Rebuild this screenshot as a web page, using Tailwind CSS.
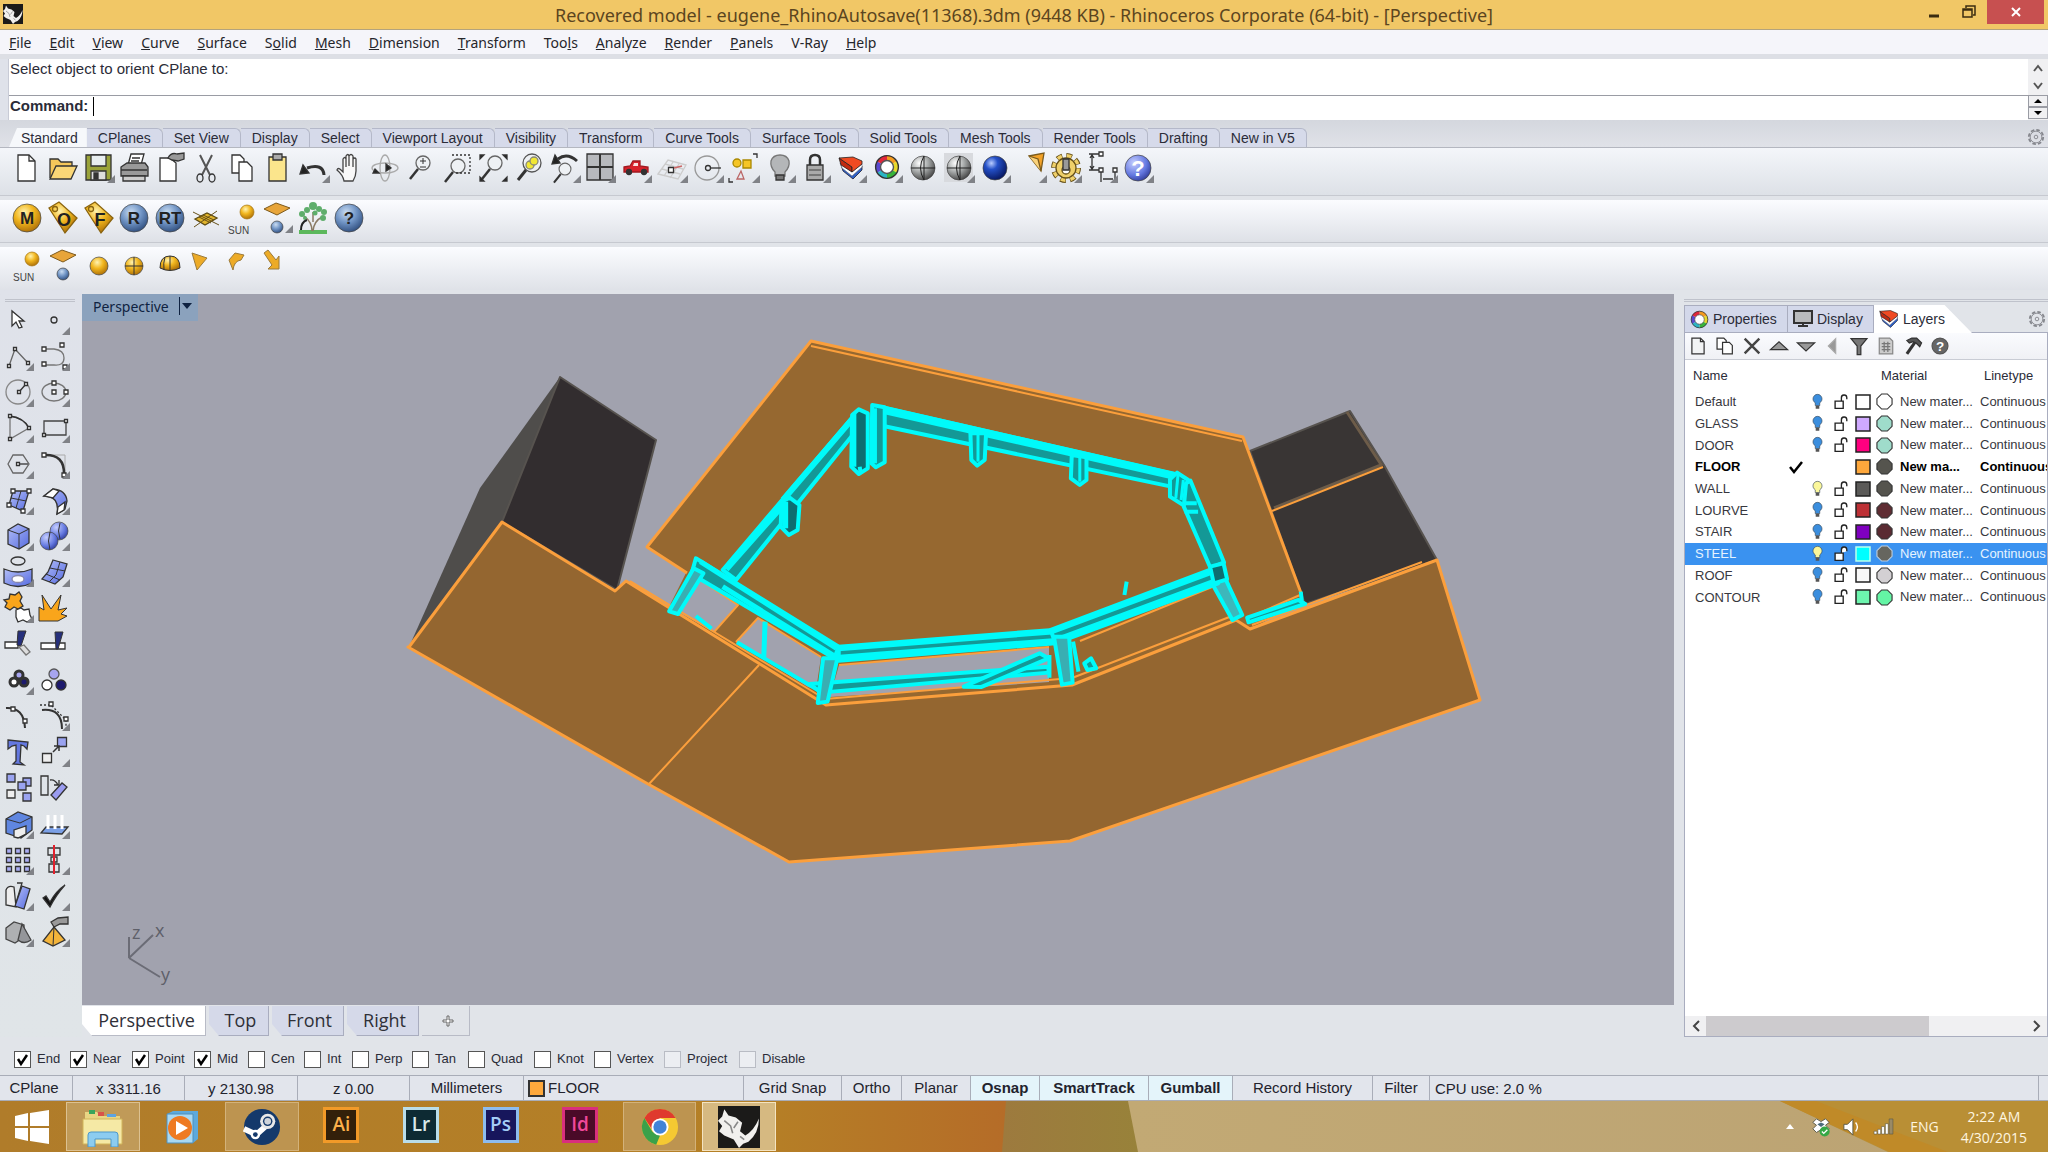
<!DOCTYPE html>
<html lang="en">
<head>
<meta charset="utf-8">
<title>Rhinoceros Corporate</title>
<script src="https://cdn.jsdelivr.net/npm/@tailwindcss/browser@4"></script>
</head>
<body class="flex min-h-screen flex-col overflow-x-hidden bg-[#e1e4e9] font-['Liberation_Sans',Arial,sans-serif] text-[14px] text-[#2b2c38]">

<svg class="absolute size-0" aria-hidden="true">
  <defs>
    <radialGradient id="gold" cx=".4" cy=".3" r=".75"><stop offset="0" stop-color="#fff3b0"/><stop offset=".45" stop-color="#f2b71f"/><stop offset="1" stop-color="#a86a05"/></radialGradient>
    <radialGradient id="blue" cx=".4" cy=".3" r=".75"><stop offset="0" stop-color="#c9dcf2"/><stop offset=".5" stop-color="#6f93c4"/><stop offset="1" stop-color="#2c4a7a"/></radialGradient>
    <radialGradient id="royal" cx=".35" cy=".3" r=".75"><stop offset="0" stop-color="#b8ccff"/><stop offset=".35" stop-color="#2450c8"/><stop offset="1" stop-color="#06155c"/></radialGradient>
    <radialGradient id="peri" cx=".35" cy=".3" r=".8"><stop offset="0" stop-color="#c5ceff"/><stop offset=".6" stop-color="#6478e0"/><stop offset="1" stop-color="#2a3590"/></radialGradient>
    <radialGradient id="grey" cx=".35" cy=".3" r=".75"><stop offset="0" stop-color="#fff"/><stop offset=".5" stop-color="#a5a8a8"/><stop offset="1" stop-color="#444"/></radialGradient>
    <linearGradient id="cube" x1="0" y1="0" x2="1" y2="1"><stop offset="0" stop-color="#b4bff8"/><stop offset="1" stop-color="#566be0"/></linearGradient>
    <symbol id="wheel" viewBox="0 0 24 24"><g fill="none" stroke-width="5"><path d="M12 4a8 8 0 0 1 7 4" stroke="#f59b1e"/><path d="M19 8a8 8 0 0 1 0 8" stroke="#e8d92a"/><path d="M19 16a8 8 0 0 1-7 4" stroke="#38b43a"/><path d="M12 20a8 8 0 0 1-7-4" stroke="#2bb5c4"/><path d="M5 16a8 8 0 0 1 0-8" stroke="#5a48d0"/><path d="M5 8a8 8 0 0 1 7-4" stroke="#e0263a"/></g><circle cx="12" cy="12" r="10.500" fill="none" stroke="#333"/><circle cx="12" cy="12" r="6" fill="#fff" stroke="#555"/></symbol>
    <symbol id="layers" viewBox="0 0 26 24"><path d="M3 9l11 9 10-8v4l-9 9-10-8z" fill="#2d5fc4" stroke="#223" stroke-width=".8"/><path d="M2 7l12 9 10-8v3l-10 9-10-8z" fill="#fff" stroke="#667" stroke-width=".6"/><path d="M1 2l13 9v5L3 9z" fill="#c22a10" stroke="#222" stroke-width=".8"/><path d="M1 2l14-1 9 4v3l-10 8v-5z" fill="#f04a22" stroke="#222" stroke-width=".8"/></symbol>
    <symbol id="gear" viewBox="0 0 20 20"><circle cx="10" cy="10" r="8" fill="none" stroke="#84868c" stroke-width="2" stroke-dasharray="4 2.300"/><circle cx="10" cy="10" r="6.500" fill="none" stroke="#84868c"/><circle cx="10" cy="10" r="2" fill="none" stroke="#84868c"/></symbol>
    <symbol id="rhino" viewBox="0 0 40 40"><path d="M0 0h40v40H0z" fill="#1b1a19"/><path d="M0 14l4-4 2-7 4 6 7 2 6 5-2 8 5 4q8-4 13-16 0 14-10 22l-5 2-4 4-5-8-9-4-5-4 3-5z" fill="#f1f0ee"/><path d="M6 14l6 5 2 7M19 15l-4 6M21 29l4 3" stroke="#888" stroke-width="1.500" fill="none"/></symbol>
    <symbol id="lock" viewBox="0 0 18 20"><path d="M3 9h9v8H3zM10 9V5.500A3 3 0 0 1 16 5v2" fill="#fff" stroke="#222" stroke-width="1.500"/></symbol>
    <symbol id="bulb" viewBox="0 0 14 20"><path d="M4.500 11C2.500 9.500 2 8 2 6.500a5 5 0 0 1 10 0c0 1.500-.5 3-2.500 4.500v3h-5z" fill="currentColor" stroke="#345" stroke-width=".7"/><path d="M5 14h4v3.500H5z" fill="#555"/></symbol>
  </defs>
</svg>

<header class="grid h-[30px] shrink-0 grid-cols-[140px_1fr_140px] items-start border-b border-[#b3a37c] bg-[#f1c766]">
  <svg class="mt-1 ml-[3px] size-[20px]"><use href="#rhino"/></svg>
  <h1 class="text-center font-['Noto_Sans','Open_Sans',sans-serif] text-[18px] leading-[30px] whitespace-nowrap text-[#5b4520]">Recovered model - eugene_RhinoAutosave(11368).3dm (9448 KB) - Rhinoceros Corporate (64-bit) - [Perspective]</h1>
  <div class="flex justify-end pr-1">
    <button aria-label="Minimize" class="flex h-[24px] w-[34px] items-center justify-center"><svg viewBox="0 0 12 12" class="size-[12px]"><path d="M1 10h10" stroke="#3b2c10" stroke-width="3"/></svg></button>
    <button aria-label="Restore" class="flex h-[24px] w-[36px] items-center justify-center"><svg viewBox="0 0 16 16" class="size-[16px]"><path d="M2 5h9v8H2zM2 6h9M5 4V2h9v9h-2" fill="none" stroke="#3b2c10" stroke-width="1.500"/></svg></button>
    <button aria-label="Close" class="flex h-[24px] w-[57px] items-center justify-center bg-[#c75050]"><svg viewBox="0 0 12 12" class="size-[12px]"><path d="M2 2l8 8M10 2l-8 8" stroke="#fff" stroke-width="2"/></svg></button>
  </div>
</header>

<nav class="flex h-[24px] shrink-0 items-center gap-[18px] bg-[#f5f5fa] pl-[9px] font-['Noto_Sans','Open_Sans',sans-serif] text-[14px] text-[#26262b]">
  <a href="#"><u>F</u>ile</a><a href="#"><u>E</u>dit</a><a href="#"><u>V</u>iew</a><a href="#"><u>C</u>urve</a><a href="#"><u>S</u>urface</a><a href="#">S<u>o</u>lid</a><a href="#"><u>M</u>esh</a><a href="#"><u>D</u>imension</a><a href="#"><u>T</u>ransform</a><a href="#">Too<u>l</u>s</a><a href="#"><u>A</u>nalyze</a><a href="#"><u>R</u>ender</a><a href="#"><u>P</u>anels</a><a href="#">V-Ray</a><a href="#"><u>H</u>elp</a>
</nav>

<section class="flex h-[66px] shrink-0 border-t-[5px] border-[#dddfe5] bg-white text-[15px]">
  <div class="w-[9px] border-r border-[#c8cbd6] bg-[#dfe2ea]"></div>
  <div class="flex flex-1 flex-col">
    <p class="h-[36px] pl-px leading-[20px]">Select object to orient CPlane to:</p>
    <div class="flex h-[25px] items-center border-t border-[#9a9ca4] pb-[3px] pl-px">
      <label for="cmd" class="font-bold">Command:</label>
      <span class="ml-[5px] h-[19px] w-px bg-black"></span>
      <input id="cmd" class="h-full flex-1 outline-none">
    </div>
  </div>
  <div class="flex w-[20px] flex-col bg-[#f0f0f2]">
    <button aria-label="Scroll up" class="flex h-[18px] items-center justify-center"><svg viewBox="0 0 12 10" class="h-[10px] w-[12px]"><path d="M2 8l4-5 4 5" fill="none" stroke="#555" stroke-width="2"/></svg></button>
    <button aria-label="Scroll down" class="flex h-[18px] items-center justify-center"><svg viewBox="0 0 12 10" class="h-[10px] w-[12px]"><path d="M2 2l4 5 4-5" fill="none" stroke="#555" stroke-width="2"/></svg></button>
    <button aria-label="Previous" class="flex h-[12px] items-center justify-center border border-[#9a9ca4]"><svg viewBox="0 0 8 4" class="h-[4px] w-[8px]"><path d="M0 4l4-4 4 4z"/></svg></button>
    <button aria-label="Next" class="flex h-[12px] items-center justify-center border border-[#9a9ca4]"><svg viewBox="0 0 8 4" class="h-[4px] w-[8px]"><path d="M0 0l4 4 4-4z"/></svg></button>
  </div>
</section>

<div class="flex h-[28px] shrink-0 items-end border-b border-[#b4b7c0] bg-gradient-to-b from-[#d4d7de] to-[#e0e2e8] pl-[9px]">
  <div id="tabs" class="flex h-[19px] items-end"></div>
  <button aria-label="Toolbar options" class="mr-[3px] mb-px ml-auto"><svg class="size-[18px]"><use href="#gear"/></svg></button>
</div>

<div class="h-[48px] shrink-0 border-b border-[#c6c9d0] bg-gradient-to-b from-[#f4f6fa] to-[#dde1e7] pl-[9px]">
  <div id="standard" class="flex h-[40px] w-[1147px] items-center"></div>
</div>
<div class="mt-[4px] h-[43px] shrink-0 border-b border-[#c6c9d0] bg-gradient-to-b from-[#fbfcff] to-[#dee1e7] pl-[9px]">
  <div id="vray" class="flex h-[36px] w-[358px] items-center"></div>
</div>
<div class="mt-[4px] h-[43px] shrink-0 bg-gradient-to-b from-[#fbfcff] to-[#dfe2e8] pl-[9px]">
  <div id="lights" class="flex h-[36px] w-[286px] items-center"></div>
</div>

<main class="flex flex-1 items-stretch">
  <aside class="w-[82px] shrink-0 bg-gradient-to-b from-[#dfe2ea] to-[#e0e5e8] pt-[9px]">
    <div class="mr-[7px] ml-[5px] h-[3px] border-y border-[#bfc2cb]"></div>
    <div id="tools" class="grid w-[72px] grid-cols-2"></div>
  </aside>

  <div class="flex min-w-0 flex-1 flex-col pt-[4px]">
    <section class="grid flex-1 bg-[#a1a2ae]">
      <svg viewBox="82 294 1592 711" class="col-start-1 row-start-1 h-[711px] w-full" role="img" aria-label="Perspective model view">
        <g stroke-linejoin="round">
          <path d="M560 377L480 488 409 647 502 522z" fill="#4f4d4b"/>
          <path d="M560 377l96 63-39 150-115-68z" fill="#322d2f" stroke="#57534f" stroke-width="2"/>
          <path d="M1250 451l100-40 34 54 53 95-132 44z" fill="#393534" stroke="#57534f" stroke-width="2"/>
          <path d="M1347 412l35 54M1274 508l107-43" stroke="#6d5c49" stroke-width="3"/>
          <path d="M811 341l432 96 58 156-1 10-51 27-13-9-165 65-246 21-157-98 18-36-39-26z" fill="#966830"/>
          <path d="M502 522l113 70 11-11 200 124 246-21 164-64 14 9 187-69 43 140-410 141-281 21-141-78-240-137z" fill="#946630"/>
          <g fill="#a1a2ae"><path d="M700 580l38 25-24 27-34-19z"/><path d="M758 618l63 39-5 33-8-3-72-45z"/><path d="M839 665l210-18v35l-85 6-134 9z"/></g>
          <g fill="none" stroke="#fb9f3c" stroke-width="2">
            <path d="M687 573l-40-26 164-206 432 96 58 156" stroke-width="3"/><path d="M811 346l431 95"/><path d="M1272 511l111-44"/>
            <path d="M409 647l93-125 113 69 11-10 200 124 246-20 164-65 14 9 187-69 43 140-410 141-281 21-141-78-240-137z" stroke-width="3"/>
            <path d="M630 581l195 118 247-21 160-62M1252 625l170-63M1250 617l50-22M649 784l110-119M700 580l38 25-24 27M736 642l22-24 63 39M839 665l210-18M1080 641l137-56" />
          </g>
        </g>
        <g transform="translate(620 320) scale(.4464 .3333)" fill="#149896" stroke="#00fafa" stroke-width="4" stroke-linejoin="round">
          <g class="[&>*]:[vector-effect:non-scaling-stroke]">
            <path d="M590 262L1250 465l-15 35L590 318z"/><path d="M592 270L1250 470" stroke-width="8"/>
            <path d="M525 285l20 20-285 475-30-30z"/><path d="M525 290L365 540M362 560L238 748" stroke-width="6"/>
            <path d="M520 285l15-17 20 12v165l-20 17-17-22z" fill="#0e6d70"/><path d="M525 280v160M537 440l2 20" stroke-width="4"/>
            <path d="M565 255l28 7v165l-20 15-10-12z"/><path d="M570 265v165" stroke-width="5"/>
            <path d="M785 340h35l-3 80-17 17-13-17z"/><path d="M802 345v80" stroke-width="3"/>
            <path d="M1012 405l33 7v68l-15 15-20-20z"/><path d="M1030 410v75" stroke-width="3"/>
            <path d="M380 533l22 22-4 75-20 15-18-25 2-75z" fill="#0e6d70"/><path d="M370 545v80" stroke-width="6"/>
            <path d="M1232 478l16-20 25 22 15 60-28 14-28-24z"/><path d="M1250 465l-5 70M1262 480l-5 60" stroke-width="3"/>
            <path d="M1268 490l10-8 75 245-30 18-60-185z"/><path d="M1262 550h30M1265 575h30"/>
            <path d="M1322 780l32-10 40 115-22 15z" fill="#3db7bb"/>
            <path d="M170 715L490 980l-10 35L160 762z"/><path d="M180 725L485 985" stroke-width="5"/><path d="M230 800L480 1008" stroke-width="5"/>
            <path d="M490 980l480-50 5 40-485 52z"/><path d="M490 986l478-50M492 1012l478-50" stroke-width="5"/>
            <path d="M1330 745l10 45-365 180-10-40z"/><path d="M966 936L1335 752M980 958l355-176" stroke-width="5"/>
            <path d="M1322 740l30-10 8 48-30 12z" fill="#0e6d70"/>
            <path d="M165 745l22 15-57 122-20-8z" fill="#39aeb2"/>
            <path d="M425 1092l535-52v18l-510 60z"/><path d="M770 1100l170-100 20 15-150 86z"/>
            <path d="M455 1015h32l-22 130-22 4z" fill="#39aeb2"/>
            <path d="M972 950h34l8 138-24 6z" fill="#39aeb2"/><path d="M1015 965l12 90M962 1005v68"/>
            <path d="M1040 1030l15-15 12 30-20 5z"/>
            <path d="M325 905l-3 110" stroke-width="5"/><path d="M262 967l180 142M170 888l35 38M1135 785l-5 40" fill="none"/>
            <path d="M1405 893l115-53 15 12-127 55zM1525 815l3 35" />
          </g>
        </g>
        <g stroke="#6b6c76" stroke-width="2" fill="none"><path d="M129 958v-21M129 958l24-23M129 958l31 19"/></g>
        <g fill="#5e5f69" class="font-['Open_Sans',sans-serif] text-[18px]"><text x="132" y="939">z</text><text x="155" y="937">x</text><text x="161" y="981">y</text></g>
      </svg>
      <button class="col-start-1 row-start-1 flex h-[27px] w-[116px] items-center self-start bg-[#8ba2bd] pb-[3px] pl-[11px] font-['Noto_Sans','Open_Sans',sans-serif] text-[14px] text-[#0f2241]">Perspective<span class="ml-auto h-[18px] w-px bg-[#0f2241]"></span><svg viewBox="0 0 10 6" class="mr-[6px] ml-[2px] h-[6px] w-[10px]"><path d="M0 0h10L5 6z" fill="#0f2241"/></svg></button>
    </section>
    <div class="flex h-[32px] shrink-0 pt-px font-['Open_Sans',sans-serif] text-[18px] text-[#2f3038]">
      <button class="h-[30px] w-[124px] border-r border-b border-[#b8bbc6] bg-white pl-[6px] [clip-path:polygon(0_0,100%_0,100%_100%,10px_100%,0_60%)]">Perspective</button>
      <button class="ml-[3px] h-[30px] w-[60px] border-r border-b border-[#a9adbf] bg-[#d5d9e9] pl-[4px] [clip-path:polygon(0_0,100%_0,100%_100%,10px_100%,0_60%)]">Top</button>
      <button class="ml-[3px] h-[30px] w-[72px] border-r border-b border-[#a9adbf] bg-[#d5d9e9] pl-[4px] [clip-path:polygon(0_0,100%_0,100%_100%,10px_100%,0_60%)]">Front</button>
      <button class="ml-[3px] h-[30px] w-[72px] border-r border-b border-[#a9adbf] bg-[#d5d9e9] pl-[4px] [clip-path:polygon(0_0,100%_0,100%_100%,10px_100%,0_60%)]">Right</button>
      <button aria-label="New viewport" class="ml-[3px] flex h-[30px] w-[48px] items-center justify-center border-r border-b border-[#b8bbc6]"><svg viewBox="0 0 12 12" class="ml-[4px] size-[12px]"><path d="M5 1h2v4h4v2H7v4H5V7H1V5h4z" fill="#fff" stroke="#666"/></svg></button>
    </div>
  </div>

  <aside class="flex w-[374px] shrink-0 flex-col pt-[9px] pl-[10px]">
    <div class="h-[3px] border-y border-[#bfc2cb]"></div>
    <div class="mt-[3px] flex h-[28px] items-stretch border-b border-[#a9adbf] text-[14px]">
      <button class="flex w-[104px] items-center gap-[4px] border-t border-r border-l border-[#a9adbf] bg-[#d3d8ea] pl-[5px]"><svg class="size-[19px]"><use href="#wheel"/></svg>Properties</button>
      <button class="flex w-[86px] items-center gap-[4px] border-t border-r border-[#a9adbf] bg-[#d3d8ea] pl-[5px]"><svg viewBox="0 0 20 18" class="h-[18px] w-[20px]"><path d="M1 1h18v12H1z" fill="#b9bbbd" stroke="#333" stroke-width="2"/><path d="M5 16h10M10 13v3" stroke="#333" stroke-width="2"/></svg>Display</button>
      <button class="flex h-[28px] w-[98px] items-center gap-[4px] bg-white pl-[5px] [clip-path:polygon(0_0,72%_0,100%_100%,0_100%)]"><svg class="size-[20px]"><use href="#layers"/></svg>Layers</button>
      <button aria-label="Panel options" class="mr-[2px] ml-auto"><svg class="size-[18px]"><use href="#gear"/></svg></button>
    </div>
    <div class="flex flex-1 flex-col border-r border-b border-l border-[#a9adbf] bg-white">
      <div class="h-[27px] border-b border-[#c9ccd4] bg-gradient-to-b from-[#fafbfe] to-[#f0f1f5]"><div id="layertools" class="flex h-full w-[268px] items-center"></div></div>
      <table class="h-[248px] w-full table-fixed border-collapse text-[13px] whitespace-nowrap">
        <colgroup><col class="w-[101px]"><col class="w-[20px]"><col class="w-[24px]"><col class="w-[24px]"><col class="w-[18px]"><col class="w-[26px]"><col class="w-[80px]"><col></colgroup>
        <thead><tr class="h-[31px] text-left text-[13px]"><th class="pl-[8px] font-normal">Name</th><th></th><th></th><th></th><th></th><th class="overflow-visible pl-[9px] font-normal">Material</th><th></th><th class="pl-[6px] font-normal">Linetype</th></tr></thead>
        <tbody id="rows"></tbody>
      </table>
      <div class="mt-auto flex h-[20px] bg-[#f0f0f2]">
        <button aria-label="Scroll left" class="flex w-[21px] items-center justify-center"><svg viewBox="0 0 10 12" class="h-[12px] w-[10px]"><path d="M8 1L3 6l5 5" fill="none" stroke="#444" stroke-width="2"/></svg></button>
        <div class="w-[223px] bg-[#cdcbce]"></div>
        <button aria-label="Scroll right" class="ml-auto flex w-[21px] items-center justify-center"><svg viewBox="0 0 10 12" class="h-[12px] w-[10px]"><path d="M2 1l5 5-5 5" fill="none" stroke="#444" stroke-width="2"/></svg></button>
      </div>
    </div>
  </aside>
</main>

<div id="osnap" role="group" aria-label="Object snaps" class="flex h-[38px] shrink-0 items-center pt-[6px] pl-[14px] text-[13px]"></div>

<footer class="flex h-[26px] shrink-0 items-stretch border-y border-[#a9adb8] bg-[#e2e5ec] text-[15px] text-[#22232d]">
  <button class="w-[73px] border-r border-[#a9adb8] pr-[4px]">CPlane</button>
  <span class="w-[112px] border-r border-[#a9adb8] text-center leading-[25px]">x 3311.16</span>
  <span class="w-[113px] border-r border-[#a9adb8] text-center leading-[25px]">y 2130.98</span>
  <span class="w-[112px] border-r border-[#a9adb8] text-center leading-[25px]">z 0.00</span>
  <button class="w-[114px] border-r border-[#a9adb8]">Millimeters</button>
  <button class="flex w-[220px] items-center gap-[3px] border-r border-[#a9adb8] pl-[4px]"><span class="size-[17px] border-2 border-[#333] bg-[#ffa93c]"></span>FLOOR</button>
  <button class="w-[98px] border-r border-[#a9adb8]">Grid Snap</button>
  <button class="w-[60px] border-r border-[#a9adb8]">Ortho</button>
  <button class="w-[69px] border-r border-[#a9adb8]">Planar</button>
  <button class="w-[69px] border-r border-[#a9adb8] bg-[#e4f4fa] font-bold">Osnap</button>
  <button class="w-[109px] border-r border-[#a9adb8] bg-[#e4f4fa] font-bold">SmartTrack</button>
  <button class="w-[84px] border-r border-[#a9adb8] bg-[#e4f4fa] font-bold">Gumball</button>
  <button class="w-[140px] border-r border-[#a9adb8]">Record History</button>
  <button class="w-[57px] border-r border-[#a9adb8]">Filter</button>
  <span class="flex-1 pl-[5px] leading-[25px]">CPU use: 2.0 %</span>
  <span class="w-[10px] border-l border-[#a9adb8]"></span>
</footer>

<div class="relative flex h-[51px] shrink-0 items-center">
  <svg viewBox="0 0 2048 51" preserveAspectRatio="none" class="absolute inset-0 -z-10 size-full">
    <defs>
      <linearGradient id="t1"><stop offset="0" stop-color="#b07c2a"/><stop offset=".75" stop-color="#b58026"/><stop offset="1" stop-color="#b56c28"/></linearGradient>
      <linearGradient id="t2"><stop offset="0" stop-color="#9d7a3e"/><stop offset="1" stop-color="#98823a"/></linearGradient>
      <linearGradient id="t3" x1="0" x2="1"><stop offset="0" stop-color="#c2a974"/><stop offset="1" stop-color="#bba374"/></linearGradient>
    </defs>
    <path d="M0 0h1008v51H0z" fill="url(#t1)"/><path d="M1006 0h134v51h-138z" fill="url(#t2)"/><path d="M1128 0h920v51h-910z" fill="url(#t3)"/>
    <path d="M1780 0h268v51h-160z" fill="#b98f35"/><path d="M1780 0h36l132 51h-58z" fill="#c08a28"/>
  </svg>
  <button aria-label="Start" class="flex w-[66px] justify-start pl-[14px]"><svg viewBox="0 0 36 34" class="h-[34px] w-[36px]" fill="#fff"><path d="M1 6l13-3v13H1zM16 3l19-3v16H16zM1 18h13v13L1 28zM16 18h19v16l-19-3z"/></svg></button>
  <div class="grid h-full w-[710px] grid-cols-9 gap-[6px] py-px">
    <button aria-label="File Explorer" class="flex items-center justify-center border border-[#dcc191] bg-[#c09a58]"><svg viewBox="0 0 42 40" class="h-[40px] w-[42px]"><path d="M3 5h12l3 4h20v28H3z" fill="#e9d583"/><path d="M1 12h39v25H1z" fill="#f5e9a5" stroke="#d1b45a"/><path d="M7 3h6v4H7z" fill="#3aa55c"/><path d="M16 5h6v4h-6z" fill="#d9534a"/><path d="M25 7h9v3h-9z" fill="#5da4e2"/><path d="M6 40V28q0-3 3-3h24q3 0 3 3v12h-7v-8H13v8z" fill="#8cccf0" stroke="#4c97c9"/></svg></button>
    <button aria-label="Media player" class="flex items-center justify-center"><svg viewBox="0 0 34 34" class="size-[34px]"><path d="M2 4l6-3h25v28l-5 4H2z" fill="#5da9dc"/><path d="M2 4h26v29H2z" fill="#a8d9f3" stroke="#4e8fbb"/><circle cx="15" cy="18" r="12" fill="#ee7a22"/><path d="M11 11v14l12-7z" fill="#fff"/></svg></button>
    <button aria-label="Steam" class="flex items-center justify-center border border-[#d3b27a] bg-[#bd9450]"><svg viewBox="0 0 40 40" class="size-[38px]"><circle cx="20" cy="20" r="19" fill="#14396b"/><path d="M1 22l13 6 10-9" stroke="#fff" stroke-width="6" fill="none"/><circle cx="13" cy="28" r="5" fill="#fff"/><circle cx="13" cy="28" r="2.500" fill="#14396b"/><circle cx="26" cy="14" r="8" fill="#e8e8e8"/><circle cx="26" cy="14" r="5" fill="#14396b"/><circle cx="26" cy="14" r="3.500" fill="#cfd4da"/></svg></button>
    <button class="m-auto flex size-[36px] -translate-y-[2px] items-center justify-center border-3 border-[#f29a28] bg-[#33200a] font-['Open_Sans',sans-serif] text-[19px] font-semibold text-[#fcb04a]">Ai</button>
    <button class="m-auto flex size-[36px] -translate-y-[2px] items-center justify-center border-3 border-[#b9ddea] bg-[#0d2a33] font-['Open_Sans',sans-serif] text-[19px] font-semibold text-[#d7e8ea]">Lr</button>
    <button class="m-auto flex size-[36px] -translate-y-[2px] items-center justify-center border-3 border-[#8dbcee] bg-[#17165c] font-['Open_Sans',sans-serif] text-[19px] font-semibold text-[#a5cdf7]">Ps</button>
    <button class="m-auto flex size-[36px] -translate-y-[2px] items-center justify-center border-3 border-[#d92f7d] bg-[#4a0a28] font-['Open_Sans',sans-serif] text-[19px] font-semibold text-[#f0489a]">Id</button>
    <button aria-label="Chrome" class="flex items-center justify-center border border-[#d3b27a] bg-[#bd9450]"><svg viewBox="0 0 40 40" class="size-[38px]"><circle cx="20" cy="20" r="19" fill="#f5c932"/><path d="M20 1a19 19 0 0 1 16.500 9.500H20L12 23 3.500 10.500A19 19 0 0 1 20 1z" fill="#df3a2e"/><path d="M3.500 10.500L12 25l8 4-4 9.600A19 19 0 0 1 3.500 10.500z" fill="#3ba14a"/><circle cx="20" cy="20" r="9" fill="#fff"/><circle cx="20" cy="20" r="7" fill="#4283d6"/></svg></button>
    <button aria-label="Rhinoceros" class="flex items-center justify-center border border-[#f4e3c0] bg-[#d6b981]"><svg class="size-[42px]"><use href="#rhino"/></svg></button>
  </div>
  <div class="ml-auto flex items-center gap-[12px] pr-[21px] font-['Open_Sans',sans-serif] text-[14px] text-[#fff6e0]">
    <button aria-label="Show hidden icons" class="mr-[4px]"><svg viewBox="0 0 10 8" class="h-[8px] w-[10px]"><path d="M1 6l4-5 4 5z" fill="#fff"/></svg></button>
    <svg viewBox="0 0 22 22" class="size-[20px]"><path d="M6 2l5 3 5-3 4 4-4 3 4 4-4 4-5-3-5 3-4-4 4-4-4-3z" fill="#fff" stroke="#554" /><path d="M7 8l4-2 4 2-4 3z" fill="#4b6b7c"/><circle cx="15" cy="16" r="5.500" fill="#35a845"/><path d="M12 16l2 2 4-4" stroke="#fff" stroke-width="1.500" fill="none"/></svg>
    <svg viewBox="0 0 20 20" class="size-[18px]"><path d="M1 7h4l6-6v18l-6-6H1z" fill="#fff" stroke="#554"/><path d="M14 5q4 5 0 10" stroke="#fff" stroke-width="1.500" fill="none"/></svg>
    <svg viewBox="0 0 22 18" class="h-[17px] w-[21px]" fill="#fff" stroke="#554" stroke-width=".6"><path d="M1 14h3v3H1zM5 12h3v5H5zM9 9h3v8H9zM13 6h3v11h-3z"/><path d="M17 1h4v16h-4z" fill="#998a66"/></svg>
    <button class="mr-[6px] ml-[4px]">ENG</button>
    <button class="ml-[4px] text-center leading-[21px]">2:22 AM<br>4/30/2015</button>
  </div>
</div>

<script>
const put = (id, html) => document.getElementById(id).innerHTML = html;
const corner = '<path d="M34 25v8h-8z" fill="#808287" stroke="none"/>';
const button = ([label, art, menu]) => `<button title="${label}" class="flex min-w-0 flex-1 justify-center"><svg viewBox="0 0 36 36" class="size-[36px] shrink-0" fill="none" stroke="#333" stroke-width="1.300">${art}${menu ? corner : ''}</svg></button>`;
const ball = (x, y, r, g) => `<circle cx="${x}" cy="${y}" r="${r}" fill="url(#${g})" stroke="#444" stroke-width=".7"/>`;
const sq = (x, y, f = '#fff', s = 4) => `<path d="M${x - s / 2} ${y - s / 2}h${s}v${s}h-${s}z" fill="${f}"/>`;
const glass = '<circle cx="20" cy="13" r="7" fill="#eef1f4" stroke="#666"/><path d="M15 19l-8 10" stroke-width="2.500"/>';
const page = '<path d="M9 5h11l6 6v20H9z" fill="#fff"/><path d="M20 5v6h6"/>';
const sun = '<circle cx="23" cy="12" r="7" fill="url(#gold)" stroke="#a67513" stroke-width=".7"/><text x="4" y="34" fill="#444" stroke="none" font-size="10">SUN</text>';
const plane = '<path d="M5 9l12-6 14 5-13 7z" fill="#e8a53a" stroke="#7d5a1c" stroke-width="1"/>' + ball(18, 27, 6, 'blue');
const cross = (g) => ball(18, 18, 12, g) + '<path d="M19 6v24M6 18h24M19 6q-7 12 0 24" stroke="#222" stroke-width="1"/>';
const disc = (t, g) => ball(18, 18, 14, g) + `<text x="18" y="24" text-anchor="middle" font-weight="bold" font-size="17" fill="#222" stroke="none">${t}</text>`;
const tag = (t) => `<path d="M4 8l10-6 18 16-12 15z" fill="url(#gold)" stroke="#8a6410"/><text x="19" y="26" text-anchor="middle" font-weight="bold" font-size="18" fill="#222" stroke="none">${t}</text><circle cx="10" cy="9" r="2.500" stroke="#8a6410"/>`;

const tabNames = ['Standard','CPlanes','Set View','Display','Select','Viewport Layout','Visibility','Transform','Curve Tools','Surface Tools','Solid Tools','Mesh Tools','Render Tools','Drafting','New in V5'];
put('tabs', tabNames.map((t, i) => i
  ? `<button class="h-[19px] border-t border-r border-[#b4b8c9] bg-[#d6daea] pr-[11px] pl-[11px] leading-[19px] whitespace-nowrap rounded-tr-[6px]">${t}</button>`
  : `<button class="h-[19px] bg-[#f6f8fb] pr-[9px] pl-[12px] leading-[20px] [clip-path:polygon(8px_0,100%_0,100%_100%,0_100%)]">${t}</button>`).join(''));

put('standard', [
  ['New', page],
  ['Open', '<path d="M5 28V9h8l3 3h11v4" fill="#f6c75a"/><path d="M5 29l6-13h21l-6 13z" fill="#fad777"/>'],
  ['Save', '<path d="M5 5h25v25H5z" fill="#9aa33a"/><path d="M10 5h15v11H10z" fill="#e8eef0"/><path d="M10 21h15v9H10z" fill="#ddd"/><path d="M13 23h4v6h-4z" fill="#333"/>', 1],
  ['Print', '<path d="M12 15l3-11h13l-3 11" fill="#fff"/><path d="M5 17l6-4h18l3 4v9H5z" fill="#999"/><path d="M5 20h26M7 26h22v5H7z" fill="#ccc"/><path d="M16 8h8M15 11h8"/>'],
  ['Document properties', '<path d="M8 8h10l6 5v18H8z" fill="#fff"/><path d="M16 8q3-6 9-4l7-1v6l-6 2-6-1z" fill="#999"/>'],
  ['Cut', '<path d="M12 5l10 20M24 5L14 25" stroke="#555" stroke-width="2"/><ellipse cx="12" cy="28" rx="3" ry="4"/><ellipse cx="24" cy="28" rx="3" ry="4"/>'],
  ['Copy', '<path d="M8 5h8l4 4v14H8z" fill="#fff"/><path d="M15 12h8l5 5v14H15z" fill="#fff"/>'],
  ['Paste', '<path d="M9 7h17v24H9z" fill="#fbe58c"/><path d="M13 4h9v6h-9z" fill="#aaa"/>'],
  ['Undo', '<path d="M28 25q-1-12-17-7" stroke-width="3" stroke="#333"/><path d="M4 24l3-9 6 8z" fill="#222"/>', 1],
  ['Pan', '<path d="M12 31q-1-6-7-11 1-3 4 0l2 2V9q2-3 3 0v8V6q2-3 3 0v10V6q2-3 4 0v11V9q2-2 3 0v12q0 5-3 10z" fill="#f8f8f8" stroke="#444"/>'],
  ['Rotate view', '<ellipse cx="18" cy="18" rx="13" ry="5" stroke="#aaa"/><ellipse cx="18" cy="18" rx="5" ry="13" stroke="#aaa"/><path d="M19 14l5 4-5 3zM8 19l4 4h-6z" fill="#222"/>'],
  ['Zoom', glass + '<path d="M17 11h6M20 8v6M17 17h6" stroke-width="1"/>'],
  ['Zoom window', '<g transform="translate(-1 3)">' + glass + '</g><path d="M13 5h18v18H17" stroke-dasharray="2 2"/>'],
  ['Zoom extents', glass + '<path d="M5 9V5h4zM28 5h4v4zM32 27v4h-4zM5 27v4h4z" fill="#222"/>'],
  ['Zoom selected', '<circle cx="21" cy="13" r="9" fill="#eef1f4" stroke="#555"/><path d="M15 20l-8 10" stroke-width="3"/><circle cx="19" cy="15" r="4" fill="#f1e733" stroke="#887"/><circle cx="23" cy="11" r="4" fill="#f1e733" stroke="#887"/>'],
  ['Undo view', '<g transform="translate(1 8) scale(.85)">' + glass + '</g><path d="M30 11Q20 2 11 9" stroke-width="3"/><path d="M5 14l3-9 5 8z" fill="#222"/>', 1],
  ['Four viewports', '<path d="M5 4h26v26H5z" fill="#b7b9bd"/><path d="M18 4v26M5 17h26" stroke-width="2"/>', 1],
  ['Set view', '<path d="M6 17l6-1 3-5h7v5l8 1v5H6z" fill="#d8202a" stroke="#a01a20"/><circle cx="11" cy="22" r="2.500" fill="#333"/><circle cx="26" cy="22" r="2.500" fill="#333"/><path d="M16 13h4v3h-5z" fill="#f9dede" stroke="none"/>', 1],
  ['Set CPlane', '<path d="M4 24l10-14 18 5-8 14zM8 19l18 5M19 12l-9 14M11 14l18 5M25 14l-9 14" stroke="#ccc"/>' + sq(17, 20, '#fff', 5) + '<path d="M20 18l8-2" stroke="#c66"/>', 1],
  ['Object snap', '<circle cx="17" cy="18" r="12" stroke="#999"/><circle cx="18" cy="18" r="2.500"/><path d="M20 18h11"/>', 1],
  ['Select', '<circle cx="11" cy="13" r="4" fill="#f5c526" stroke="#a80"/><path d="M17 10h8v8h-8z" fill="#f5c526" stroke="#a80"/><path d="M11 29l4-8 3 8z" stroke="#b66"/><path d="M27 4h4v4M3 28v4h4"/>', 1],
  ['Hide', '<path d="M13 22q-5-5-4-11 2-6 9-6t9 6q1 6-4 11v4h-10z" fill="#b4b6b8" stroke="#777"/><path d="M14 25h8v5h-8z" fill="#777"/>', 1],
  ['Lock', '<path d="M13 16v-6q0-5 5-5t5 5v6" stroke-width="2.500"/><path d="M10 15h16v15H10z" fill="#aaa"/><path d="M12 20h12M12 25h12" stroke="#666"/>', 1],
  ['Layers', '<svg x="5" y="5" width="26" height="26"><use href="#layers"/></svg>', 1],
  ['Properties', '<svg x="5" y="4" width="26" height="26"><use href="#wheel"/></svg>', 1],
  ['Shade', cross('grey')],
  ['Shaded viewport', '<path d="M3 3h29v29H3z" fill="#d8dade" stroke="none"/>' + cross('grey'), 1],
  ['Render', ball(18, 18, 12, 'royal'), 1],
  ['Spotlight', '<path d="M16 6l15-3-3 18z" fill="#f3a227" stroke="#7a5a1c"/><path d="M16 6l9 3 3 12" fill="#f9d27c" stroke="#7a5a1c"/>', 1],
  ['Options', '<circle cx="18" cy="18" r="11" stroke="#665018" stroke-width="8" stroke-dasharray="5 3.640"/><circle cx="18" cy="18" r="11" stroke="#efd06a" stroke-width="6" stroke-dasharray="4 4.640" stroke-dashoffset="-.5"/><circle cx="18" cy="18" r="10" fill="#efd06a" stroke="#665018"/><circle cx="18" cy="20" r="4" fill="#fff" stroke="#665018"/><path d="M15 9h6v11h-6z" fill="#999"/>', 1],
  ['Dimension', '<path d="M5 4h12M8 6v12M5 20h12v12M31 20v12M19 29h10M10 8l-2-3-2 3M10 16l-2 3-2-3"/>' + sq(17, 4) + sq(17, 20) + sq(31, 20), 1],
  ['Help', ball(18, 18, 13, 'peri') + '<text x="18" y="26" text-anchor="middle" font-size="22" font-weight="bold" fill="#fff" stroke="none">?</text>', 1]
].map(button).join(''));

put('vray', [
  ['Material editor', disc('M', 'gold')], ['V-Ray options', tag('O')], ['Frame buffer', tag('F')], ['Render', disc('R', 'blue')], ['Real-time render', disc('RT', 'blue')],
  ['Infinite plane', '<path d="M7 19l12-6 10 5-12 7z" fill="#e0b32c" stroke="#5c4a12"/><path d="M5 12l26 13M29 11L6 27M11 17l12 6M15 15l11 5" stroke="#665018" stroke-width="1"/>'],
  ['Sun', sun], ['Plane light', plane, 1],
  ['Proxy', '<path d="M4 30h28v4H4z" fill="#5cb85c" stroke="none"/><path d="M17 31q0-9-8-15M18 31q1-10 9-14M18 22v-10" stroke="#8b7b65" stroke-width="1.500"/><g fill="#5fae6c" stroke="none"><circle cx="7" cy="14" r="3"/><circle cx="12" cy="10" r="3"/><circle cx="18" cy="6" r="4"/><circle cx="24" cy="9" r="3"/><circle cx="29" cy="12" r="3"/><circle cx="28" cy="18" r="3"/><circle cx="20" cy="13" r="2.500"/><circle cx="10" cy="18" r="2"/></g><path d="M6 30q0-8 6-10" stroke="#222" stroke-width="2"/>'],
  ['Help', disc('?', 'blue')]
].map(button).join(''));

put('lights', [
  ['Sun', sun], ['Rectangular light', plane],
  ['Omni light', ball(19, 19, 9, 'gold')],
  ['Sphere light', ball(18, 19, 9, 'gold') + '<path d="M18 10v18M9 19h18" stroke-width="1"/>'],
  ['Dome light', '<path d="M8 21q0-12 10-12t10 12q-10 5-20 0z" fill="url(#gold)" stroke-width="1"/><path d="M18 9v14M13 10q-2 6-1 13" stroke-width="1"/>'],
  ['Spot light', '<path d="M4 6l15 5-10 12z" fill="#edab27" stroke="#9a7a3c" stroke-width="1"/>'],
  ['IES light', '<path d="M6 13l6-7 9 2-3 5q-7 1-8 10z" fill="#edab27" stroke="#9a7a3c" stroke-width="1"/>'],
  ['Directional light', '<path d="M5 6l4-3 8 10 3-4v13H9l4-4z" fill="#edab27" stroke="#9a7a3c" stroke-width="1"/>']
].map(button).join(''));

const box = '<path d="M8 12l10-6 11 5v14l-10 6-11-5z" fill="url(#cube)"/><path d="M8 12l11 4 10-5M19 16v15" stroke-width="1"/>';
put('tools', [
  ['Select', '<path d="M12 9v15l4-4 3 6 3-1-3-6h5z" fill="#fff"/>'],
  ['Point', '<circle cx="18" cy="18" r="3"/>', 1],
  ['Polyline', '<path d="M9 28l6-17 13 14" stroke="#666"/>' + sq(9, 28, '#fff', 3) + sq(15, 11, '#fff', 3) + sq(28, 25, '#fff', 3), 1],
  ['Curve', '<path d="M8 11h10q10 1 10 9t-10 7H8" stroke="#777"/>' + sq(8, 11) + sq(26, 7) + sq(8, 26) + sq(29, 29), 1],
  ['Circle', '<circle cx="18" cy="18" r="12" stroke="#888"/><path d="M19 18l7-8"/>' + sq(19, 18, '#fff', 3) + sq(26, 10, '#fff', 3), 1],
  ['Ellipse', '<ellipse cx="18" cy="18" rx="12" ry="9" stroke="#777"/>' + sq(18, 9) + sq(18, 18) + sq(30, 18), 1],
  ['Arc', '<path d="M10 6q14 2 19 12L10 29z" stroke="#777"/><path d="M10 6q14 2 19 12" stroke-width="1.500"/>' + sq(10, 6, '#fff', 3) + sq(29, 18, '#fff', 3) + sq(10, 29, '#fff', 3), 1],
  ['Rectangle', '<path d="M8 11h22v14H8z" stroke="#444"/>' + sq(30, 11, '#fff', 3) + sq(8, 25, '#fff', 3), 1],
  ['Polygon', '<path d="M8 18l5-9h10l6 9-6 9H13z" stroke="#666"/><path d="M18 18h10"/>' + sq(18, 18, '#fff', 3), 1],
  ['Fillet', '<path d="M8 9h21v20" stroke="#aaa" stroke-width="1"/><path d="M8 9q21-1 20 20" stroke-width="2.500"/>' + sq(8, 9) + sq(28, 29), 1],
  ['Surface', '<path d="M13 9h16l-6 20-14-6z" fill="url(#cube)"/><path d="M21 9l-5 17M11 16l15 3" stroke-width="1"/>' + sq(13, 9) + sq(29, 9) + sq(9, 23) + sq(23, 29), 1],
  ['Sweep', '<path d="M8 14l9-7q13 1 14 12l-2 8-8 5q3-18-13-18z" fill="url(#cube)"/><path d="M8 14l9-7 6 2-6 7zM22 25l7-5-1 8-7 4z" fill="#fff"/>', 1],
  ['Box', box, 1],
  ['Boolean', ball(23, 13, 9, 'peri') + ball(13, 23, 9, 'peri') + '<path d="M14 14q-3 9 0 18M24 5q-3 8 0 16" stroke-width="1"/>', 1],
  ['Project curves', '<ellipse cx="18" cy="7" rx="7" ry="4"/><path d="M4 15q14 6 28 0v14q-14 7-28 0z" fill="url(#cube)"/><ellipse cx="18" cy="25" rx="6" ry="3.500" fill="#fff" stroke="#88a"/>', 1],
  ['Surface from mesh', '<path d="M17 6l14 4-4 13-8 7-13-5 6-7z" fill="url(#cube)"/><path d="M24 8l-4 13-7 7M14 14l15 3M10 20l14 6" stroke-width="1"/>', 1],
  ['Plug-ins', '<path d="M4 10l5-1 1-5 5 1 4-3 3 5-2 4 3 5-5 3-4-2-4 3-5-3 2-4z" fill="#f9a51b"/><path d="M16 20l5-2 3 2 5-1 1 6 2 4-5 3-4-2-5 2-2-5z" fill="#fff"/>', 1],
  ['Explode', '<path d="M3 31V17l5 3-2-15 9 14L25 5l-3 15 9-2-6 6 6 2-9 5z" fill="#f9a51b" stroke-width="1"/>'],
  ['Trim', '<path d="M5 16h13v6H5z" fill="#fff"/><path d="M18 5h8l-5 15-4-1z" fill="#26307c" stroke-width="1"/><path d="M19 21l5-2 6 7-4 3z" fill="#ddd" stroke="#777"/>'],
  ['Split', '<path d="M5 17h24v6H5z" fill="#fff"/><path d="M19 6h8l-5 17h-2z" fill="#26307c" stroke-width="1"/>'],
  ['Group', '<g stroke-width="3"><circle cx="19" cy="13" r="4" fill="#a7a5ef"/><circle cx="14" cy="20" r="4" fill="#fff"/><circle cx="24" cy="20" r="4" fill="#1d1a6c"/></g>', 1],
  ['Ungroup', '<circle cx="18" cy="12" r="5" fill="#a7a5ef" stroke="#555"/><circle cx="11" cy="23" r="5" fill="#fff"/><circle cx="25" cy="23" r="5" fill="#1d1a6c"/>'],
  ['Edit points', '<path d="M6 10q18-1 19 20" stroke-width="2"/>' + sq(13, 11) + sq(25, 23)],
  ['Control points', '<path d="M6 12q20-2 20 19" stroke-width="2"/><path d="M4 7h11l15 15v10" stroke-dasharray="2 2"/>' + sq(15, 6) + sq(30, 21), 1],
  ['Text', '<path d="M8 6l20 2-1 7-3-3-3-1-1 17 4 3-11-1 3-3V11l-4 1-4 3z" fill="#6478e0"/>'],
  ['Move', sq(26, 8, '#9aa3f0', 9) + sq(11, 24, '#eee', 9) + '<path d="M17 18l6-6m-5 0h5v5" stroke-width="1.500"/>', 1],
  ['Copy', sq(11, 8, '#9aa3f0', 8) + sq(27, 12, '#9aa3f0', 8) + sq(22, 16, '#9aa3f0', 8) + sq(11, 24, '#eee', 8) + sq(27, 27, '#9aa3f0', 8)],
  ['Rotate', '<path d="M5 6h7v19H5zM14 10q5-1 8 5m-4 0h5v-5"/><path d="M15 25l11-12 5 4-11 13z" fill="#9a9cf0"/>'],
  ['Solid edit', '<path d="M6 13l12-7 14 5v13l-11 8-15-5z" fill="#5f86e0"/><path d="M6 13l14 4 12-6" stroke-width="1"/><path d="M14 31v-7q6-2 12-4v8l-8 4z" fill="#eee"/>', 1],
  ['Direction', '<path d="M5 27l5-6h22l-6 7z" fill="#7ba0e6"/><path d="M12 23V9M19 23V9M26 23V9" stroke="#fff" stroke-width="3"/>', 1],
  ['Array', [9, 18, 27].map(y => [9, 18, 27].map(x => sq(x, y, '#a9acf3', 5)).join('')).join(''), 1],
  ['Align', '<path d="M12 6h12v7H12zM15 15h6v5h-6zM13 22h10v8H13z"/><path d="M18 3v29" stroke="#e2202c" stroke-width="2"/>', 1],
  ['History', '<path d="M6 12q2-5 8-3l2 20-10-2z" fill="#eee"/><path d="M17 5h5l-6 20" /><path d="M22 8l8 3-6 20-9-3z" fill="url(#cube)"/>', 1],
  ['Check', '<path d="M7 20l3-2 4 6Q20 13 29 7 20 17 14 29z" fill="#111"/>', 1],
  ['Mesh', '<path d="M6 14l8-6 10 3v12l-9 6-9-4z" fill="#aeb0b2" stroke="#444"/><path d="M22 10l9 16q-7 5-13 0z" fill="#94969a" stroke="#444"/>', 1],
  ['Render tools', '<path d="M18 13l11 13-12 6-10-5z" fill="#f3b43b"/><path d="M18 13l-1 19" stroke-width="1"/><path d="M15 8l7-4 10-1v7h-8l-6 3z" fill="#999"/>', 1]
].map(button).join(''));

put('layertools', [
  ['New layer', '<path d="M8 5h14l6 6v20H8z" fill="#f2f3f4"/><path d="M22 5v6h6"/>'],
  ['New sublayer', '<path d="M5 5h11l4 4v14H5z" fill="#fff"/><path d="M14 12h11l5 5v14H14z" fill="#fff"/>'],
  ['Delete', '<path d="M6 6l24 24M30 6L6 30" stroke="#444" stroke-width="4"/>'],
  ['Move up', '<path d="M4 24L18 11l14 13z" fill="#999"/>'],
  ['Move down', '<path d="M4 13h28L18 26z" fill="#999"/>'],
  ['Move to parent', '<path d="M24 6v24L12 18z" fill="#999" stroke="#aaa"/>'],
  ['Filter', '<path d="M5 6h26L21 18v14h-6V18z" fill="#777"/>'],
  ['Columns', '<path d="M7 5h17l5 5v21H7z" fill="#ccc" stroke="#888"/><path d="M11 14h14M11 19h14M11 24h14M15 11v17M21 11v17" stroke="#777"/>'],
  ['Tools', '<path d="M8 31l14-20" stroke-width="5"/><path d="M8 9l8-4h8l8 8-3 6-6-6-5-2-6 2z" fill="#555"/>'],
  ['Help', '<circle cx="18" cy="18" r="13" fill="#666" stroke="#555"/><text x="18" y="26" text-anchor="middle" font-size="22" font-weight="bold" fill="#fff" stroke="none">?</text>']
].map(([l, a]) => `<button title="${l}" class="flex flex-1 justify-center"><svg viewBox="0 0 36 36" class="size-[22px]" fill="none" stroke="#333" stroke-width="2">${a}</svg></button>`).join(''));

const layers = [
  ['Default', '#3b8ede', '#fff', '#fff'], ['GLASS', '#3b8ede', '#cfa9ff', '#9fdccb'], ['DOOR', '#3b8ede', '#ff007f', '#9fdccb'],
  ['FLOOR', '', '#ffa83c', '#55544e'], ['WALL', '#fbf79a', '#5b5a58', '#55544e'], ['LOURVE', '#3b8ede', '#bd3035', '#5f2d33'],
  ['STAIR', '#3b8ede', '#7f00bf', '#5a2b32'], ['STEEL', '#fbf79a', '#00ffff', '#66665f'], ['ROOF', '#3b8ede', '#f8f8f8', '#d3d0d3'], ['CONTOUR', '#3b8ede', '#6df5ae', '#64f5a5']];
put('rows', layers.map(([name, bulb, color, mat]) => {
  const current = name === 'FLOOR', selected = name === 'STEEL';
  return `<tr class="${selected ? 'bg-[#3a92f0] text-[#e6f4ff]' : current ? 'font-bold text-black' : 'text-[#38383e]'}">
    <td class="p-0 pl-[10px] leading-[19px]">${name}</td>
    <td class="p-0">${current ? '<svg viewBox="0 0 14 14" class="ml-[3px] size-[14px]"><path d="M1 7l4 5 8-10" fill="none" stroke="#000" stroke-width="2.500"/></svg>' : ''}</td>
    <td class="p-0">${bulb ? `<svg class="ml-[5px] h-[18px] w-[13px]" style="color:${bulb}"><use href="#bulb"/></svg>` : ''}</td>
    <td class="p-0">${bulb ? '<svg class="ml-[2px] h-[18px] w-[17px]"><use href="#lock"/></svg>' : ''}</td>
    <td class="p-0"><svg viewBox="0 0 16 16" class="ml-px size-[16px]"><path d="M1 1h14v14H1z" fill="${color}" stroke="${selected ? '#bfe' : '#222'}" stroke-width="1.500"/></svg></td>
    <td class="p-0"><svg viewBox="0 0 18 18" class="ml-[4px] size-[17px]"><path d="M6 1h6l5 5v6l-5 5H6l-5-5V6z" fill="${mat}" stroke="${selected ? '#bcd' : '#333'}" stroke-width="1.200"/></svg></td>
    <td class="p-0 pl-[2px]">${current ? 'New ma...' : 'New mater...'}</td><td class="overflow-hidden p-0 pl-[2px]">Continuous</td></tr>`;
}).join(''));

const snaps = [['End', 'w-[56px]', 1], ['Near', 'w-[62px]', 1], ['Point', 'w-[62px]', 1], ['Mid', 'w-[54px]', 1], ['Cen', 'w-[56px]'], ['Int', 'w-[48px]'], ['Perp', 'w-[60px]'], ['Tan', 'w-[56px]'], ['Quad', 'w-[66px]'], ['Knot', 'w-[60px]'], ['Vertex', 'w-[70px]'], ['Project', 'w-[75px]'], ['Disable', 'w-[80px]']];
put('osnap', snaps.map(([t, w, on], i) => `<label class="flex items-center gap-[6px] ${w}"><span class="grid"><input type="checkbox" ${on ? 'checked' : ''} class="peer col-start-1 row-start-1 size-[17px] appearance-none border ${i > 10 ? 'border-[#b9bcc4] bg-[#eceef2]' : 'border-[#555] bg-white'}"><svg viewBox="0 0 17 17" class="pointer-events-none col-start-1 row-start-1 hidden size-[17px] peer-checked:block"><path d="M4 8l3 5 6-9" fill="none" stroke="#000" stroke-width="2.500"/></svg></span>${t}</label>`).join(''));
</script>
</body>
</html>
